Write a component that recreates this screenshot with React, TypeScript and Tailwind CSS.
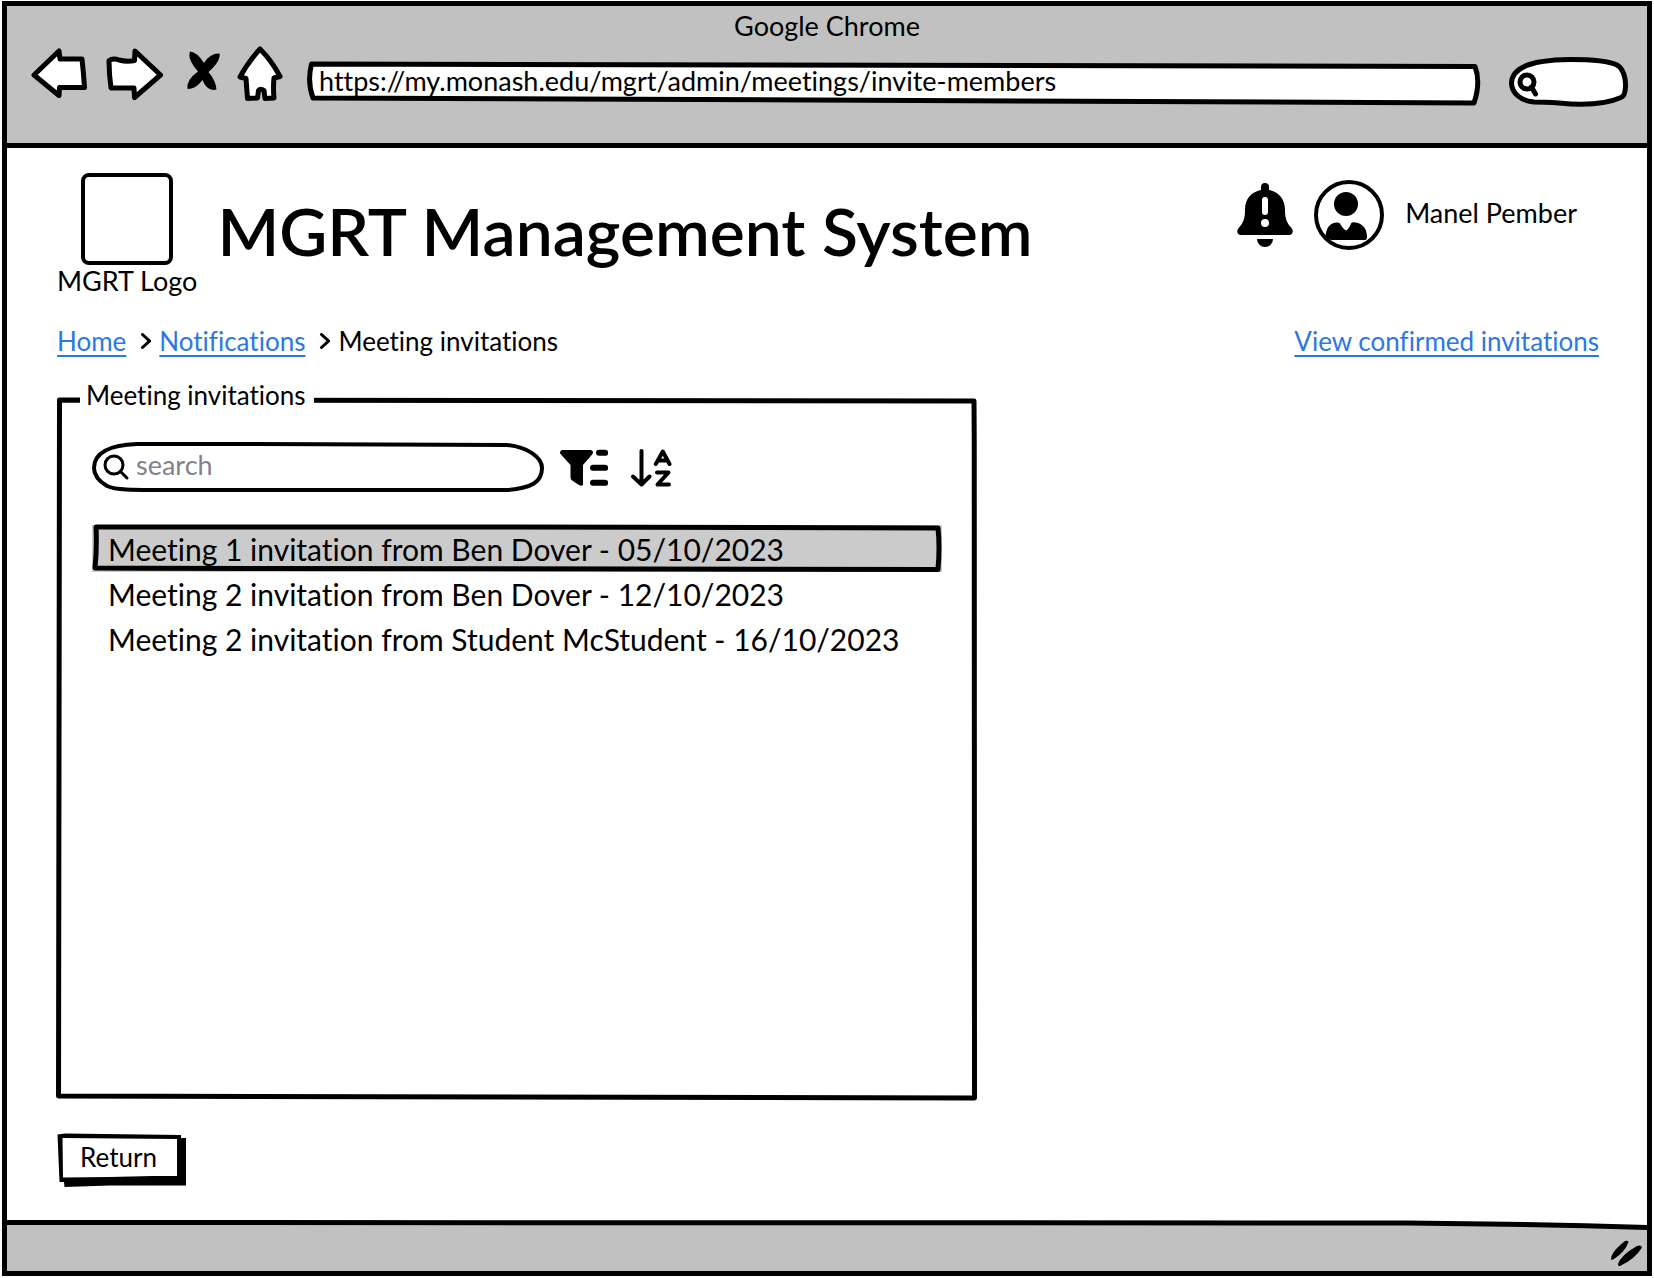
import React from "react";

type FrameProps = { box: string; children: React.ReactNode };

/* Hand-drawn outline stretched behind the content of its relative parent. */
function Frame({ box, children }: FrameProps) {
  return (
    <svg
      aria-hidden="true"
      viewBox={box}
      preserveAspectRatio="none"
      className="pointer-events-none absolute inset-0 h-full w-full overflow-visible"
    >
      {children}
    </svg>
  );
}

const navShape = "fill-white stroke-black stroke-[5px]";

function BackIcon() {
  return (
    <svg viewBox="0 0 58 60" className="h-[60px] w-[58px]" aria-hidden="true">
      <path className={navShape} strokeLinejoin="round" d="M3 29 L28 5 L29 13 L51 13 Q52.500 26 53.500 41.500 L28.500 41.500 L28 49.500 Z" />
    </svg>
  );
}

function ForwardIcon() {
  return (
    <svg viewBox="0 0 58 60" className="h-[60px] w-[58px]" aria-hidden="true">
      <path className={navShape} strokeLinejoin="round" d="M4 14.500 Q8 12 14 14 Q22 16 29.500 14.500 L30 5 L55.500 29 L29.500 51.500 L29 42 L6 42 Q4 28 4 14.500 Z" />
    </svg>
  );
}

function StopIcon() {
  return (
    <svg viewBox="0 0 42 60" className="h-[60px] w-[42px]" aria-hidden="true">
      <path d="M11 5.500 Q18 6 25 17 Q31 7 40.500 7.500 Q42 15 29.500 26 Q37 35 37.500 43.500 Q28 46 23.500 34 Q17 43 8.500 43 Q7 34 19 25.500 Q8 13 11 5.500 Z" />
    </svg>
  );
}

function HomeIcon() {
  return (
    <svg viewBox="0 0 46 60" className="h-[60px] w-[46px]" aria-hidden="true">
      <path className={navShape} strokeLinejoin="round" d="M23 3 Q35 15 43 30.500 L37 32 Q36 42 37 52 L28 52.500 L27 44.500 Q23.500 42 21.500 44.500 L20.500 52 L10.500 52.500 L9 32.500 L3 31 Q11 16 23 3 Z" />
    </svg>
  );
}

function BellIcon() {
  return (
    <svg viewBox="0 0 56 64" className="h-16 w-14" aria-hidden="true">
      <path d="M24 4 a4 4 0 0 1 8 0 V7 C42 9 48 16 48 27 C48 36 50 40 54 44.500 C57 48 56 52 52 52 H4 C0 52 -1 48 2 44.500 C6 40 8 36 8 27 C8 16 14 9 24 7 Z" />
      <path d="M20 56 H36 A8 8 0 0 1 20 56 Z" />
      <path d="M28 17 V29" className="stroke-white stroke-[6px]" strokeLinecap="round" />
      <circle cx="28" cy="40" r="4" className="fill-white" />
    </svg>
  );
}

function AvatarIcon() {
  return (
    <svg viewBox="0 0 70 70" className="h-[70px] w-[70px]" aria-hidden="true">
      <circle cx="35" cy="35" r="33" className="fill-none stroke-black stroke-[4px]" />
      <circle cx="32" cy="24" r="12" />
      <path d="M11.500 57 C12 48 16 43 22 42.500 Q25 42 26 43.500 Q29 49 32 50.500 Q35 49 37 43.500 Q38 41.500 42 42.500 C50 44 53 50 53 57 Q53 60 51 60 H17 Z" />
    </svg>
  );
}

function FilterIcon() {
  return (
    <svg viewBox="0 0 48 38" className="h-[38px] w-12" aria-hidden="true">
      <path d="M2 1 H31 Q34 2 32.500 5 L23 16 V36 Q21 37.500 18 35.500 L11.500 31 Q10.500 30 10.500 28 V16 L0.500 5 Q-1 2 2 1 Z" />
      <path d="M39 3.800 H45.200 M33 18.800 H45.200 M33 33.800 H45.200" className="stroke-black stroke-[6px]" strokeLinecap="round" />
    </svg>
  );
}

function SortIcon() {
  return (
    <svg viewBox="0 0 42 38" className="h-[38px] w-[42px] fill-none stroke-black" strokeLinecap="round" strokeLinejoin="round" aria-hidden="true">
      <path d="M10.500 2 V35 M2 27.500 L10.500 35.500 L18.500 27.500" className="stroke-[4px]" />
      <path d="M24.800 15 L31.800 2.500 L38.500 15 M27.500 11.500 H36" className="stroke-[4px]" />
      <path d="M26 23.500 H37.500 L26.500 35.500 H38" className="stroke-[4px]" />
    </svg>
  );
}

function Chevron() {
  return (
    <svg viewBox="0 0 10 16" className="ml-[15px] mr-2 h-4 w-2.5 shrink-0" aria-hidden="true">
      <path d="M1.500 1.500 L8.500 8 L1.500 14.500" className="fill-none stroke-black stroke-[3px]" strokeLinecap="round" />
    </svg>
  );
}

const link = "text-[#2b78e4] underline decoration-2 underline-offset-4 [text-decoration-skip-ink:none]";

const invitations = [
  "Meeting 1 invitation from Ben Dover - 05/10/2023",
  "Meeting 2 invitation from Ben Dover - 12/10/2023",
  "Meeting 2 invitation from Student McStudent - 16/10/2023",
];

function BrowserBar() {
  return (
    <header className="h-[142px] border-b-[5px] border-black bg-[#c1c1c1] pt-1 text-[27px] leading-8">
      <p className="text-center">Google Chrome</p>
      <div className="mt-1 flex items-end gap-6 pl-6 pr-[18px]">
        <nav aria-label="Browser" className="flex gap-4">
          <button aria-label="Back"><BackIcon /></button>
          <button aria-label="Forward"><ForwardIcon /></button>
          <button aria-label="Stop"><StopIcon /></button>
          <button aria-label="Home"><HomeIcon /></button>
        </nav>
        <div className="relative h-11 min-w-0 flex-1">
          <Frame box="0 0 1178 44">
            <path
              d="M4.500 2 C300 0 700 1 1168 4.500 Q1174 20 1167 41 C800 42 500 37 260 37 L6 36 Q0 20 4.500 2 Z"
              className={navShape}
              vectorEffect="non-scaling-stroke"
              strokeLinejoin="round"
            />
          </Frame>
          <input
            aria-label="Address"
            defaultValue="https://my.monash.edu/mgrt/admin/meetings/invite-members"
            className="relative h-full w-full bg-transparent pb-2 pl-3 outline-none"
          />
        </div>
        <div className="relative h-[50px] w-[120px] shrink-0">
          <Frame box="0 0 120 50">
            <path
              d="M25 46 C12 45 2.500 37 2.500 27 C3 13 18 4 61 3.500 C85 3.500 102 6 108 9 C115 13 117 24 116.500 31 Q116 40 112 41.500 C95 49 70 49 50 47 Q35 46 25 46 Z"
              className={navShape}
              strokeLinejoin="round"
            />
            <circle cx="18" cy="26" r="7" className="fill-none stroke-black stroke-[5px]" />
            <path d="M22.500 31 L26.500 38" className="stroke-black stroke-[5px]" strokeLinecap="round" />
          </Frame>
          <input aria-label="Browser search" className="relative h-full w-full bg-transparent pb-1 pl-9 pr-3 outline-none" />
        </div>
      </div>
    </header>
  );
}

function InvitationPanel() {
  return (
    <section aria-labelledby="panel-title" className="relative mt-5 min-h-[723px] w-full max-w-[920px] px-[35px]">
      <div className="absolute inset-x-0 bottom-0 top-[21px]">
        <Frame box="0 0 920 702">
          <path
            d="M2.500 2 C300 2 600 1.500 917 3 C918.500 250 918.500 500 917.500 700 C600 701 300 699 1.500 698 C2 450 3 200 2.500 2 Z"
            className="fill-none stroke-black stroke-[5px]"
            vectorEffect="non-scaling-stroke"
            strokeLinejoin="round"
          />
        </Frame>
      </div>
      <h2 id="panel-title" className="relative -ml-3 w-fit bg-white pl-1.5 pr-2 pt-0.5">Meeting invitations</h2>
      <div className="relative mt-8 flex items-center">
        <div className="relative h-[50px] w-[452px]">
          <Frame box="0 0 452 50">
            <path
              d="M45 1 C160 1 300 1 415 2 C435 4 450 14 450 25 C450 39 440 45 415 47 H70 C45 47 25 47.500 15 43 C5 37 2 31 2 25 C2 9 20 2 45 1 Z"
              className="fill-white stroke-black stroke-[4px]"
            />
            <circle cx="22" cy="22" r="9" className="fill-none stroke-black stroke-[3px]" />
            <path d="M28.500 28.500 L35 35" className="stroke-black stroke-[3px]" strokeLinecap="round" />
          </Frame>
          <input
            type="search"
            aria-label="Search invitations"
            placeholder="search"
            className="relative h-full w-full bg-transparent pb-2 pl-11 pr-4 text-[27px] outline-none placeholder:text-[#82828e]"
          />
        </div>
        <button aria-label="Filter" className="ml-4"><FilterIcon /></button>
        <button aria-label="Sort A to Z" className="ml-[23px]"><SortIcon /></button>
      </div>
      <ul className="relative mt-8 text-[30px] leading-9">
        {invitations.map((text, i) => (
          <li key={text} className="relative">
            {i === 0 && (
              <div className="absolute inset-x-0 -bottom-0.5 top-0 bg-[#cbcbcb]">
                <Frame box="0 0 850 47">
                  <path
                    d="M4 2 C300 1.500 550 2 846 3 Q848 22 846 44.500 C600 45 300 45 3 43 Q5 24 4 2 Z"
                    className="fill-none stroke-black stroke-[5px]"
                    vectorEffect="non-scaling-stroke"
                    strokeLinejoin="round"
                  />
                </Frame>
              </div>
            )}
            <button className="relative h-[45px] w-full pl-4 pt-0.5 text-left">{text}</button>
          </li>
        ))}
      </ul>
    </section>
  );
}

export default function App() {
  return (
    <div className="min-h-screen flex flex-col bg-white px-0.5 pb-0.5 pt-px font-['Lato',sans-serif] text-[26px] leading-8 text-black [font-variant-ligatures:no-common-ligatures]">
      <div className="flex flex-1 flex-col border-[5px] border-black">
        <BrowserBar />

        <main className="flex-1 pb-7 pl-[50px] pr-12 pt-[25px]">
          <div className="flex items-start gap-5">
            <figure className="flex flex-col items-center">
              <div className="h-[92px] w-[92px] rounded-lg border-4 border-black" />
              <figcaption className="whitespace-nowrap text-[27px] leading-8">MGRT Logo</figcaption>
            </figure>
            <h1 className="whitespace-nowrap pt-[22px] text-[66px] font-semibold leading-[72px]">MGRT Management System</h1>
            <div className="ml-auto flex items-center gap-[21px] pr-[22px] pt-[7px]">
              <button aria-label="Notifications"><BellIcon /></button>
              <button aria-label="Account"><AvatarIcon /></button>
              <span className="whitespace-nowrap pb-1 text-[27px] leading-8">Manel Pember</span>
            </div>
          </div>

          <div className="mt-7 flex justify-between">
            <nav aria-label="Breadcrumb">
              <ol className="flex">
                <li className="flex items-center"><a href="#home" className={link}>Home</a><Chevron /></li>
                <li className="flex items-center"><a href="#notifications" className={link}>Notifications</a><Chevron /></li>
                <li aria-current="page">Meeting invitations</li>
              </ol>
            </nav>
            <a href="#confirmed" className={link}>View confirmed invitations</a>
          </div>

          <InvitationPanel />

          <button className="relative mt-[33px] block h-[54px] w-[129px] pb-1.5 pr-1.5">
            <Frame box="0 0 129 54">
              <path d="M0.500 1.500 L8 0.500 L124 2 V5 H129 V52.500 H53 L7.500 54 L7 49 H2.500 Z" />
              <path d="M5.500 5 L120 6 V43 L96 43 L53 44 L6 44.500 Z" className="fill-white" />
            </Frame>
            <span className="relative">Return</span>
          </button>
        </main>

        <footer className="relative flex h-[51px] items-end justify-end p-1">
          <Frame box="0 0 1640 51">
            <path d="M0 2.500 C300 5 600 2 1400 3 Q1520 4 1640 7.500 V51 H0 Z" className="fill-[#c1c1c1]" />
            <path d="M0 2.500 C300 5 600 2 1400 3 Q1520 4 1640 7.500" className="fill-none stroke-black stroke-[5px]" vectorEffect="non-scaling-stroke" />
          </Frame>
          <svg viewBox="0 0 34 28" className="relative h-7 w-[34px]" aria-hidden="true">
            <path d="M2 20 Q2 13 16 2 Q19 1 19.500 3 Q16 13 5 20 Q2 21.500 2 20 Z" />
            <path d="M9 25 Q12 16 28 7 Q32 5.500 33 8.500 Q26 20 11 27 Q8.500 27.500 9 25 Z" />
          </svg>
        </footer>
      </div>
    </div>
  );
}
